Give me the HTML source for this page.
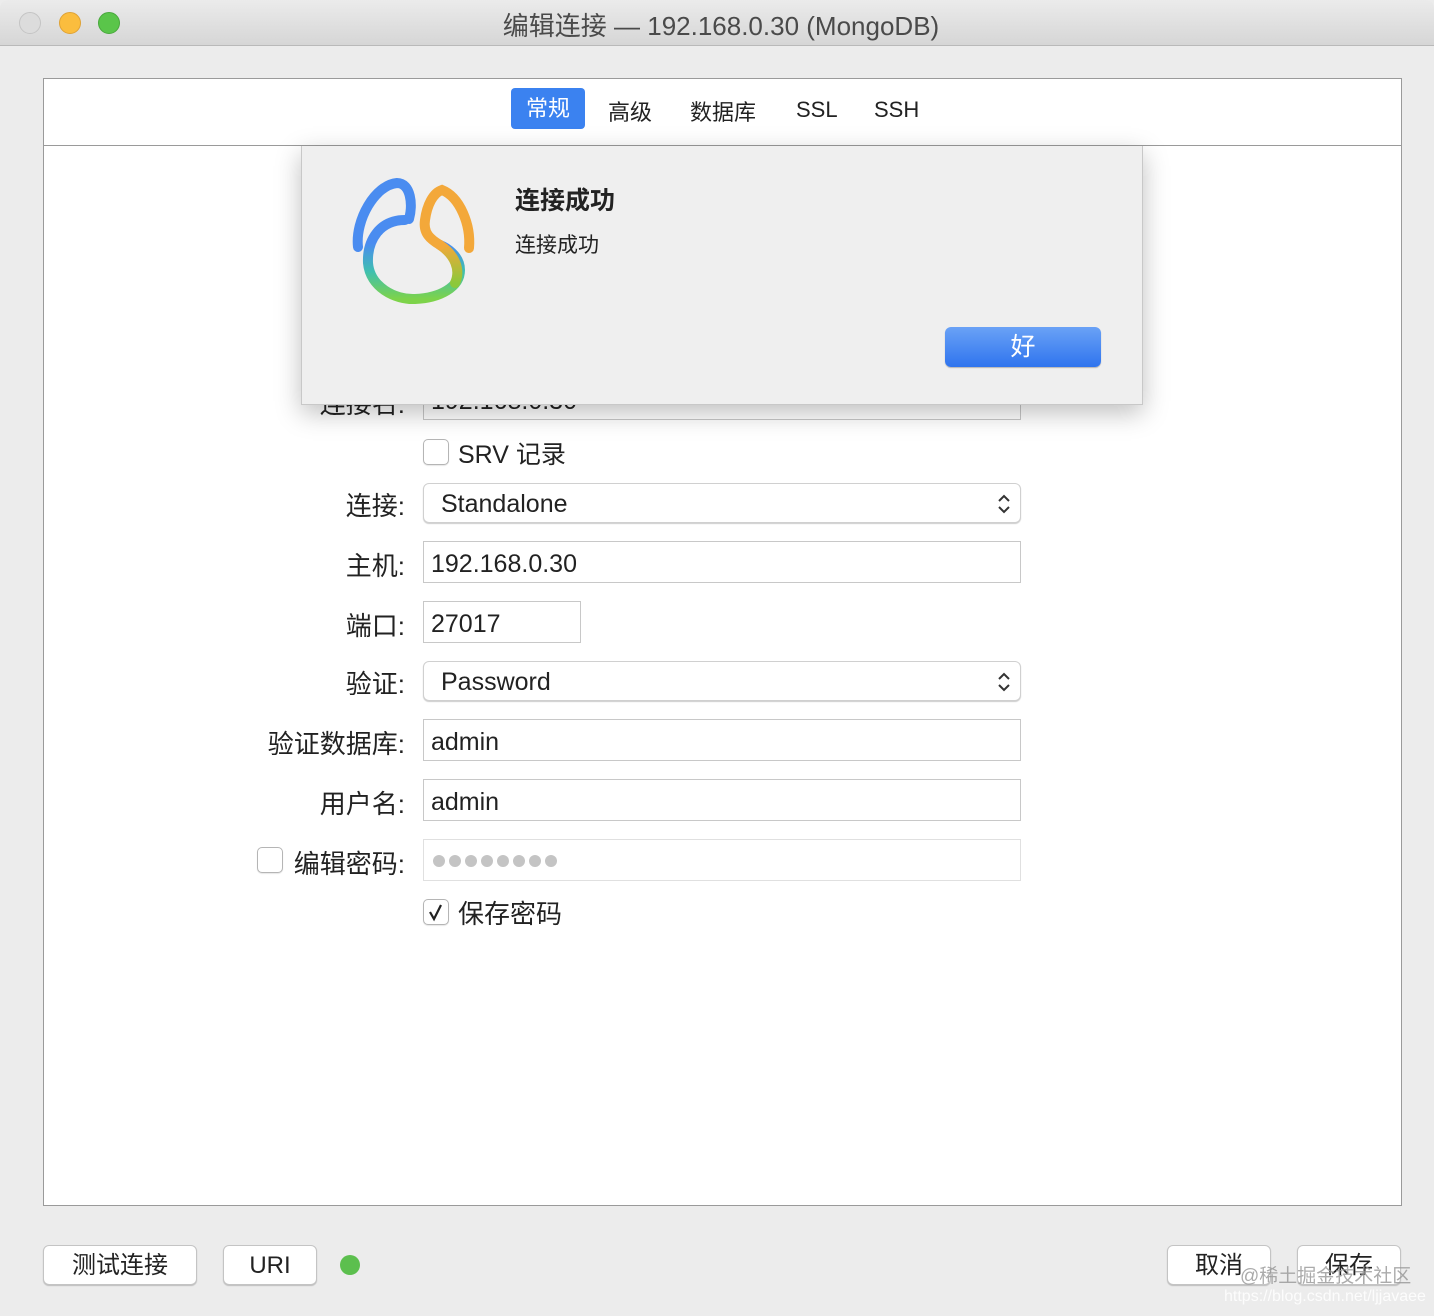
<!DOCTYPE html>
<html><head><meta charset="utf-8"><style>
*{box-sizing:border-box;margin:0;padding:0}
body{width:1434px;height:1316px;background:#ececec;font-family:"Liberation Sans","Noto Sans CJK SC",sans-serif;color:#222;position:relative;overflow:hidden}
.a{position:absolute}
.title{left:0;top:0;width:1434px;height:46px;background:linear-gradient(#ebebeb,#d6d6d6);border-bottom:1px solid #b9b9b9;border-radius:8px 8px 0 0}
.dot{width:22px;height:22px;border-radius:50%;top:12px}
.panel{left:43px;top:78px;width:1359px;height:1128px;background:#fff;border:1px solid #9a9a9a}
.lbl{font-size:26px;text-align:right;width:220px;left:185px;line-height:30px}
.fld{left:423px;width:598px;height:42px;border:1px solid #c8c8c8;font-size:25px;padding-left:7px;background:#fff;display:flex;align-items:center;padding-top:5px}
.sel{border-radius:6px;box-shadow:0 1px 1px rgba(0,0,0,.2);padding-left:17px;border-color:#d0d0d0;padding-top:3px}
.cb{width:26px;height:26px;border:1px solid #b5b5b5;border-radius:5px;background:#fff;box-shadow:0 1px 1px rgba(0,0,0,.1)}
.btn{background:#fff;border:1px solid #c4c4c4;border-radius:6px;box-shadow:0 1px 1px rgba(0,0,0,.2);font-size:24px;text-align:center;line-height:40px;height:40px;top:1245px}
</style></head><body>
<div class="a title"></div>
<div class="a dot" style="left:19px;background:#dcdcdc;border:1px solid #c4c4c4"></div>
<div class="a dot" style="left:59px;background:#fbbd3e;border:1px solid #dfa234"></div>
<div class="a dot" style="left:98px;background:#5ac54a;border:1px solid #48a83c"></div>
<div class="a" style="left:0;width:1442px;top:6px;text-align:center;font-size:26px;color:#4a4a4a">编辑连接 — 192.168.0.30 (MongoDB)</div>

<div class="a panel"></div>
<div class="a" style="left:44px;top:145px;width:1357px;height:1px;background:#9a9a9a"></div>
<div class="a" style="left:511px;top:88px;width:74px;height:41px;background:#3b82f0;border-radius:4px;color:#fff;font-size:22px;text-align:center;line-height:41px">常规</div>
<div class="a" style="left:608px;top:95px;font-size:22px">高级</div>
<div class="a" style="left:690px;top:95px;font-size:22px">数据库</div>
<div class="a" style="left:796px;top:97px;font-size:22px">SSL</div>
<div class="a" style="left:874px;top:97px;font-size:22px">SSH</div>

<div class="a lbl" style="top:389px">连接名:</div>
<div class="a fld" style="top:378px">192.168.0.30</div>

<div class="a cb" style="left:423px;top:439px"></div>
<div class="a" style="left:458px;top:440px;font-size:25px;line-height:30px">SRV 记录</div>

<div class="a lbl" style="top:491px">连接:</div>
<div class="a fld sel" style="top:483px;height:40px">Standalone
<svg class="a" style="right:8px;top:8px" width="16" height="24" viewBox="0 0 16 24"><path d="M3 9 L8 4 L13 9 M3 15 L8 20 L13 15" fill="none" stroke="#333" stroke-width="2"/></svg></div>

<div class="a lbl" style="top:551px">主机:</div>
<div class="a fld" style="top:541px">192.168.0.30</div>

<div class="a lbl" style="top:611px">端口:</div>
<div class="a fld" style="top:601px;width:158px">27017</div>

<div class="a lbl" style="top:669px">验证:</div>
<div class="a fld sel" style="top:661px;height:40px">Password
<svg class="a" style="right:8px;top:8px" width="16" height="24" viewBox="0 0 16 24"><path d="M3 9 L8 4 L13 9 M3 15 L8 20 L13 15" fill="none" stroke="#333" stroke-width="2"/></svg></div>

<div class="a lbl" style="top:729px">验证数据库:</div>
<div class="a fld" style="top:719px">admin</div>

<div class="a lbl" style="top:789px">用户名:</div>
<div class="a fld" style="top:779px">admin</div>

<div class="a cb" style="left:257px;top:847px"></div>
<div class="a lbl" style="top:849px">编辑密码:</div>
<div class="a fld" style="top:839px;border-color:#e0e0e0;padding-top:2px">
<svg width="130" height="16"><g fill="#c4c4c4"><circle cx="8" cy="8" r="6"/><circle cx="24" cy="8" r="6"/><circle cx="40" cy="8" r="6"/><circle cx="56" cy="8" r="6"/><circle cx="72" cy="8" r="6"/><circle cx="88" cy="8" r="6"/><circle cx="104" cy="8" r="6"/><circle cx="120" cy="8" r="6"/></g></svg></div>

<div class="a cb" style="left:423px;top:899px"><svg width="24" height="24" style="display:block"><path d="M6 12 L10 19 L17 5" fill="none" stroke="#222" stroke-width="2.2"/></svg></div>
<div class="a" style="left:458px;top:899px;font-size:26px;line-height:30px">保存密码</div>

<!-- dialog -->
<div class="a" style="left:301px;top:146px;width:842px;height:259px;background:#efefef;border:1px solid #c8c8c8;border-top:none;box-shadow:0 8px 24px rgba(0,0,0,.25)"></div>
<svg class="a" style="left:345px;top:175px" width="140" height="135" viewBox="0 0 140 135">
<defs><linearGradient id="g" x1="0" y1="0" x2="0" y2="1"><stop offset="0.3" stop-color="#4a8cf0"/><stop offset="0.65" stop-color="#3fbfb0"/><stop offset="1" stop-color="#7dd34a"/></linearGradient>
<linearGradient id="o" x1="0" y1="0" x2="0" y2="1"><stop offset="0" stop-color="#f3a83a"/><stop offset="1" stop-color="#8cc83a"/></linearGradient></defs>
<path d="M60 45 C35 45 22 65 23 88 C25 112 50 125 70 124 C95 123 115 112 115 95 C115 80 100 72 95 70" fill="none" stroke="url(#g)" stroke-width="10" stroke-linecap="round"/>
<path d="M95 70 C110 80 116 95 110 108" fill="none" stroke="url(#o)" stroke-width="10" stroke-linecap="round"/>
<path d="M13 72 C10 45 30 10 52 8 C66 8 68 30 64 44" fill="none" stroke="#4a8cf0" stroke-width="10" stroke-linecap="round"/>
<path d="M95 70 C85 64 78 58 80 45 C82 30 88 18 97 15 C115 22 126 50 124 73" fill="none" stroke="#f3a83a" stroke-width="10" stroke-linecap="round"/>
</svg>
<div class="a" style="left:515px;top:181px;font-size:25px;font-weight:bold">连接成功</div>
<div class="a" style="left:515px;top:229px;font-size:21px">连接成功</div>
<div class="a" style="left:945px;top:327px;width:156px;height:40px;border-radius:6px;background:linear-gradient(#6aa2f6,#2f74ee);color:#fff;font-size:25px;text-align:center;line-height:40px;box-shadow:0 1px 1px rgba(0,0,0,.25)">好</div>

<!-- bottom -->
<div class="a btn" style="left:43px;width:154px">测试连接</div>
<div class="a btn" style="left:223px;width:94px">URI</div>
<div class="a" style="left:340px;top:1255px;width:20px;height:20px;border-radius:50%;background:#5cbf4e"></div>
<div class="a btn" style="left:1167px;width:104px">取消</div>
<div class="a btn" style="left:1297px;width:104px">保存</div>
<div class="a" style="left:1240px;top:1261px;font-size:19px;color:rgba(150,150,150,.8)">@稀土掘金技术社区</div>
<div class="a" style="left:1224px;top:1288px;font-size:16px;color:rgba(255,255,255,.85)">https://blog.csdn.net/ljjavaee</div>
</body></html>
